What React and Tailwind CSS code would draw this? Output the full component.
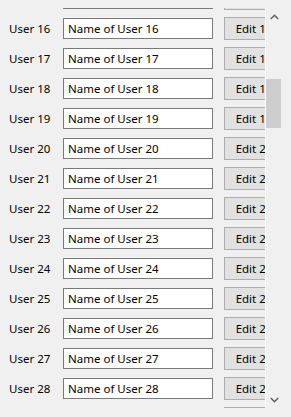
import React from "react";

const rows = Array.from({ length: 15 }, (_, i) => 15 + i);

export default function App() {
  return (
    <div
      className="w-[291px] h-[417px] bg-[#f0f0f0] overflow-hidden text-[11.5px] text-black"
      style={{ fontFamily: '"Noto Sans", "Open Sans", sans-serif' }}
    >
      <div className="mt-[8px] h-[400px] flex">
        <div className="w-[265px] h-full overflow-hidden shrink-0">
          <div className="mt-[-24px] flex flex-col">
            {rows.map((n) => (
              <div key={n} className="h-[30px] w-[284px] flex items-start shrink-0">
                <div className="w-[63px] h-[29px] shrink-0 pl-[9px] flex items-center whitespace-nowrap leading-none">
                  {n > 15 ? `User ${n}` : ""}
                </div>
                <div className="mt-[4px] w-[150px] h-[21px] shrink-0 border border-[#7a7a7a] bg-white flex items-center pl-[4px] whitespace-nowrap leading-none">
                  {n > 15 ? `Name of User ${n}` : ""}
                </div>
                <div className="mt-[3px] ml-[11px] w-[60px] h-[23px] shrink-0 border border-[#adadad] bg-[#e1e1e1] flex items-center justify-center whitespace-nowrap leading-none">
                  {n > 15 ? `Edit ${n}` : ""}
                </div>
              </div>
            ))}
          </div>
        </div>
        <div className="w-[17px] h-full shrink-0 border-l border-white bg-[#f0f0f0] flex flex-col">
          <div className="h-[17px] flex items-center justify-center">
            <svg width="9" height="6" viewBox="0 0 9 6">
              <polyline points="0.8,5 4.5,1.3 8.2,5" fill="none" stroke="#606060" strokeWidth="1.5" />
            </svg>
          </div>
          <div className="flex-1 pr-[1px]">
            <div className="mt-[54px] h-[49px] bg-[#cdcdcd]" />
          </div>
          <div className="h-[17px] flex items-center justify-center">
            <svg width="9" height="6" viewBox="0 0 9 6">
              <polyline points="0.8,1 4.5,4.7 8.2,1" fill="none" stroke="#606060" strokeWidth="1.5" />
            </svg>
          </div>
        </div>
      </div>
    </div>
  );
}
